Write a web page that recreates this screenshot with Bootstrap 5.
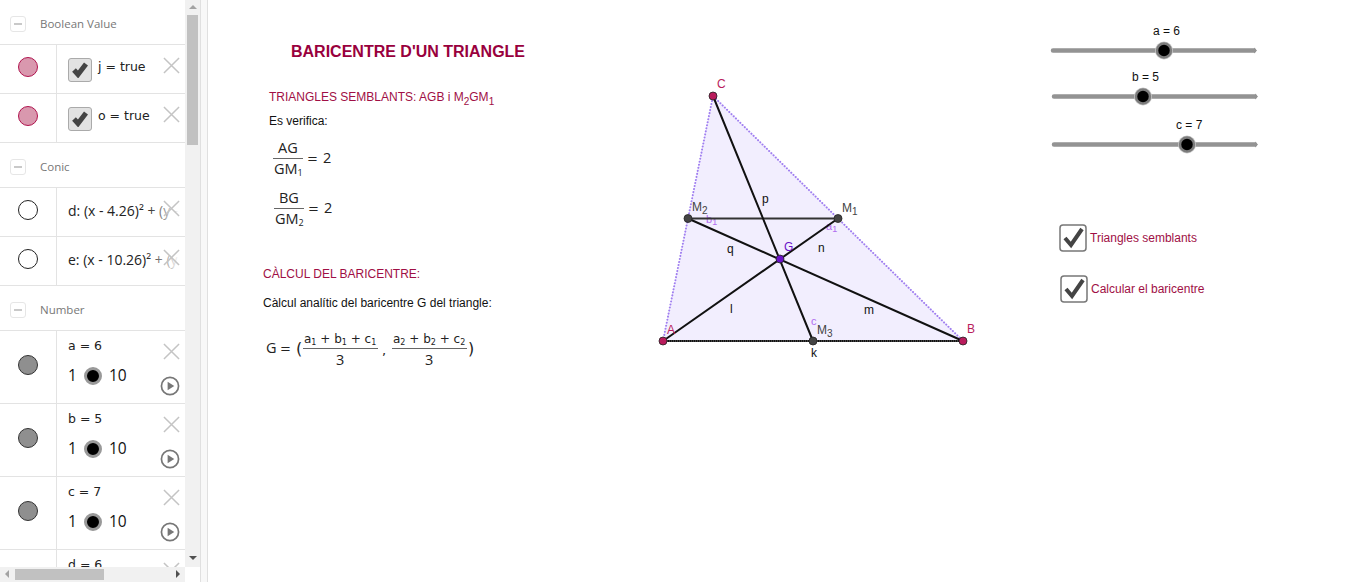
<!DOCTYPE html>
<html lang="ca">
<head>
<meta charset="utf-8">
<title>Baricentre d'un triangle</title>
<link href="https://cdn.jsdelivr.net/npm/bootstrap@5.3.0/dist/css/bootstrap.min.css" rel="stylesheet">
<style>
html,body{height:100%;overflow:hidden;background:#fff}
.applet{height:582px;font-family:"Open Sans","Liberation Sans",sans-serif}
.algebra{width:200px;flex:none;position:relative;overflow:hidden}
.algebra-view{width:185px;height:567px;overflow:hidden}
.group-head{height:45px;flex:none;border-bottom:1px solid #e3e3e3;color:#777;font-size:11.500px;padding:4px 0 0 10px;gap:14px}
.collapse-box{width:16px;height:16px;border:1px solid #e6e6e6;border-radius:3px;flex:none}
.collapse-box::after{content:"";width:8px;height:2px;background:#c9c9c9}
.item{border-bottom:1px solid #e3e3e3;height:49px;flex:none}
.item.tall{height:73px}
.marble-cell{width:57px;flex:none;border-right:1px solid #e3e3e3;padding-bottom:4px}
.marble{width:20px;height:20px;border-radius:50%;border:1px solid #222}
.marble.rose{background:#d998ae;border-color:#b0144e}
.marble.grey{background:#8f8f8f;border-color:#333}
.item-body{position:relative;flex:1;min-width:0;padding-left:11px;white-space:nowrap;overflow:hidden;font:12.500px/1.5 "DejaVu Sans",sans-serif;color:#222}
.item-body.line{padding-bottom:4px}
.item-body.tall-body{padding-top:6px}
.item-body.fading{font:14px/1.5 "Open Sans",sans-serif}
.item-body.fading::after{content:"";position:absolute;top:0;bottom:0;right:0;width:38px;background:linear-gradient(90deg,rgba(255,255,255,0),#fff 85%)}
.tick{width:24px;height:24px;background:#e2e2e2;border:1px solid #aaa;border-radius:3px;margin:5px 6px 0 0;flex:none}
.kill{position:absolute;left:106px;top:12px;width:17px;height:17px;z-index:1}
.player{position:absolute;left:103px;top:45px;width:20px;height:20px}
.range-row{font:15.500px/1 "Open Sans",sans-serif;color:#111;gap:7px;margin-top:11px}
.knob{width:18px;height:18px;border-radius:50%;background:#000;border:3px solid #999}
.sb-v{width:15px;background:#f1f1f1;height:567px;position:absolute;left:185px;top:0}
.sb-v i{position:absolute;left:2px;top:15px;width:11px;height:130px;background:#c1c1c1}
.sb-h{width:185px;height:15px;background:#f1f1f1;position:absolute;left:0;top:567px}
.sb-h i{position:absolute;left:15px;top:2px;width:89px;height:11px;background:#c1c1c1}
.arrow{position:absolute;width:0;height:0;border:4px solid transparent}
.a-up{left:189px;top:5px;border-bottom-color:#a3a3a3;border-top-width:0}
.a-down{left:189px;top:556px;border-top-color:#505050;border-bottom-width:0}
.a-left{left:5px;top:570px;border-right-color:#a3a3a3;border-left-width:0}
.a-right{left:176px;top:570px;border-left-color:#505050;border-right-width:0}
.gutter{width:8px;flex:none;background:#f8f8f8;border-left:1px solid #e0e0e0;border-right:1px solid #e0e0e0}
.canvas-wrap{flex:1;min-width:0}
.canvas-wrap svg{display:block}
.t{font-family:"Liberation Sans",Arial,sans-serif}
.m{font-family:"DejaVu Sans",sans-serif;fill:#222}
.caps{font-family:"Open Sans",sans-serif;font-size:14.500px}
</style>
</head>
<body class="m-0">
<main class="applet d-flex">
  <aside class="algebra">
    <div class="algebra-view d-flex flex-column">
      <div class="group-head d-flex align-items-center"><span class="collapse-box d-flex align-items-center justify-content-center"></span>Boolean Value</div>
      <div class="item d-flex"><div class="marble-cell d-flex align-items-center justify-content-center"><span class="marble rose"></span></div><div class="item-body line d-flex align-items-center"><span class="tick d-flex align-items-center justify-content-center"><svg width="18" height="16" viewBox="0 0 18 16"><path d="M3 8l4 4.500L15 2" fill="none" stroke="#444" stroke-width="5"/></svg></span>j = true<svg class="kill" viewBox="0 0 18 18"><path d="M1 1l16 16M17 1L1 17" stroke="#c4c4c4" stroke-width="1.6"/></svg></div></div>
      <div class="item d-flex"><div class="marble-cell d-flex align-items-center justify-content-center"><span class="marble rose"></span></div><div class="item-body line d-flex align-items-center"><span class="tick d-flex align-items-center justify-content-center"><svg width="18" height="16" viewBox="0 0 18 16"><path d="M3 8l4 4.500L15 2" fill="none" stroke="#444" stroke-width="5"/></svg></span>o = true<svg class="kill" viewBox="0 0 18 18"><path d="M1 1l16 16M17 1L1 17" stroke="#c4c4c4" stroke-width="1.6"/></svg></div></div>
      <div class="group-head d-flex align-items-center"><span class="collapse-box d-flex align-items-center justify-content-center"></span>Conic</div>
      <div class="item d-flex"><div class="marble-cell d-flex align-items-center justify-content-center"><span class="marble"></span></div><div class="item-body line fading d-flex align-items-center">d: (x - 4.26)² + (y -<svg class="kill" viewBox="0 0 18 18"><path d="M1 1l16 16M17 1L1 17" stroke="#c4c4c4" stroke-width="1.6"/></svg></div></div>
      <div class="item d-flex"><div class="marble-cell d-flex align-items-center justify-content-center"><span class="marble"></span></div><div class="item-body line fading d-flex align-items-center">e: (x - 10.26)² + (y<svg class="kill" viewBox="0 0 18 18"><path d="M1 1l16 16M17 1L1 17" stroke="#c4c4c4" stroke-width="1.6"/></svg></div></div>
      <div class="group-head d-flex align-items-center"><span class="collapse-box d-flex align-items-center justify-content-center"></span>Number</div>
      <div class="item tall d-flex"><div class="marble-cell d-flex align-items-center justify-content-center"><span class="marble grey"></span></div><div class="item-body tall-body">a = 6<div class="range-row d-flex align-items-center">1<span class="knob"></span>10</div><svg class="kill" viewBox="0 0 18 18"><path d="M1 1l16 16M17 1L1 17" stroke="#c4c4c4" stroke-width="1.6"/></svg><svg class="player" viewBox="0 0 21 21"><circle cx="10.5" cy="10.5" r="9" fill="none" stroke="#777" stroke-width="1.8"/><path d="M8 6l7 4.5-7 4.5z" fill="#777"/></svg></div></div>
      <div class="item tall d-flex"><div class="marble-cell d-flex align-items-center justify-content-center"><span class="marble grey"></span></div><div class="item-body tall-body">b = 5<div class="range-row d-flex align-items-center">1<span class="knob"></span>10</div><svg class="kill" viewBox="0 0 18 18"><path d="M1 1l16 16M17 1L1 17" stroke="#c4c4c4" stroke-width="1.6"/></svg><svg class="player" viewBox="0 0 21 21"><circle cx="10.5" cy="10.5" r="9" fill="none" stroke="#777" stroke-width="1.8"/><path d="M8 6l7 4.5-7 4.5z" fill="#777"/></svg></div></div>
      <div class="item tall d-flex"><div class="marble-cell d-flex align-items-center justify-content-center"><span class="marble grey"></span></div><div class="item-body tall-body">c = 7<div class="range-row d-flex align-items-center">1<span class="knob"></span>10</div><svg class="kill" viewBox="0 0 18 18"><path d="M1 1l16 16M17 1L1 17" stroke="#c4c4c4" stroke-width="1.6"/></svg><svg class="player" viewBox="0 0 21 21"><circle cx="10.5" cy="10.5" r="9" fill="none" stroke="#777" stroke-width="1.8"/><path d="M8 6l7 4.5-7 4.5z" fill="#777"/></svg></div></div>
      <div class="item tall d-flex"><div class="marble-cell"></div><div class="item-body tall-body">d = 6<svg class="kill" viewBox="0 0 18 18"><path d="M1 1l16 16M17 1L1 17" stroke="#c4c4c4" stroke-width="1.6"/></svg></div></div>
    </div>
    <div class="sb-v"><i></i></div><div class="sb-h"><i></i></div>
    <span class="arrow a-up"></span><span class="arrow a-down"></span><span class="arrow a-left"></span><span class="arrow a-right"></span>
  </aside>
  <div class="gutter"></div>
  <div class="canvas-wrap">
    <svg width="1144" height="582" viewBox="208 0 1144 582" role="img" aria-label="Baricentre d'un triangle">
      <g class="t">
        <text x="291" y="57" font-size="16" font-weight="700" fill="#99003d">BARICENTRE D'UN TRIANGLE</text>
        <text x="269" y="101" font-size="12" fill="#a00f45">TRIANGLES SEMBLANTS: AGB i M<tspan font-size="10" dy="4">2</tspan><tspan dy="-4">GM</tspan><tspan font-size="10" dy="4">1</tspan></text>
        <text x="269" y="125" font-size="12" fill="#111">Es verifica:</text>
        <text x="263" y="278" font-size="12" fill="#a00f45">CÀLCUL DEL BARICENTRE:</text>
        <text x="263" y="307" font-size="12" fill="#111">Càlcul analític del baricentre G del triangle:</text>
      </g>
      <g class="m" font-size="13">
        <text class="caps" x="278" y="153">AG</text><path d="M273 158.500h30" stroke="#666"/><text class="caps" x="274" y="174">GM<tspan font-size="9" dy="2">1</tspan></text><text x="307" y="163">=</text><text class="caps" x="323" y="163">2</text>
        <text class="caps" x="279" y="203">BG</text><path d="M274 208.500h30" stroke="#666"/><text class="caps" x="275" y="224">GM<tspan font-size="9" dy="2">2</tspan></text><text x="308" y="213">=</text><text class="caps" x="324" y="213">2</text>
        <text class="caps" x="266" y="353">G</text><text x="280" y="353">=</text><text x="296" y="354" font-size="16">(</text>
        <text x="304" y="343" font-size="12">a<tspan font-size="8" dy="2">1</tspan><tspan dy="-2"> + b</tspan><tspan font-size="8" dy="2">1</tspan><tspan dy="-2"> + c</tspan><tspan font-size="8" dy="2">1</tspan></text>
        <path d="M303 348.500h75M392 348.500h75" stroke="#666"/>
        <text class="caps" x="336" y="365">3</text><text x="382" y="355">,</text>
        <text x="393" y="343" font-size="12">a<tspan font-size="8" dy="2">2</tspan><tspan dy="-2"> + b</tspan><tspan font-size="8" dy="2">2</tspan><tspan dy="-2"> + c</tspan><tspan font-size="8" dy="2">2</tspan></text>
        <text class="caps" x="425" y="365">3</text><text x="468" y="354" font-size="16">)</text>
      </g>

      <path d="M663 341L963 341L713 96Z" fill="#f2eefe"/>
      <path d="M663 341L713 96L963 341" fill="none" stroke="#a07ff0" stroke-width="2" stroke-linecap="round" stroke-dasharray=".1 3"/>
      <g class="t" font-size="11" fill="#b06cf0"><text x="706" y="223">b<tspan font-size="9" dy="2">1</tspan></text><text x="826" y="230">a<tspan font-size="9" dy="2">1</tspan></text><text x="811" y="325">c</text></g>
      <path d="M663 341H963" stroke="#111" stroke-width="2"/>
      <path d="M663 341H963" stroke="#777" stroke-width="1" stroke-dasharray="1 1"/>
      <path d="M688 218.500H838" stroke="#333" stroke-width="2"/>
      <g stroke="#111" stroke-width="2"><path d="M713 96L813 341M663 341L838 218.500M688 218.500L963 341"/></g>

      <g class="t" font-size="12" fill="#111"><text x="762" y="203">p</text><text x="727" y="253">q</text><text x="818" y="252">n</text><text x="730" y="313">l</text><text x="864" y="314">m</text><text x="811" y="357">k</text></g>
      <g class="t" font-size="12" fill="#444"><text x="692" y="211">M<tspan font-size="10" dy="3">2</tspan></text><text x="842" y="212">M<tspan font-size="10" dy="3">1</tspan></text><text x="817" y="334">M<tspan font-size="10" dy="3">3</tspan></text></g>
      <g class="t" font-size="12" fill="#b91c5c"><text x="717" y="88">C</text><text x="667" y="334">A</text><text x="967" y="333">B</text></g>
      <text class="t" x="784" y="251" font-size="12" fill="#6a10c8">G</text>

      <g stroke="#222" stroke-width=".8" fill="#b91c5c"><circle cx="713" cy="96" r="4"/><circle cx="663" cy="341" r="4"/><circle cx="963" cy="341" r="4"/></g>
      <g stroke="#222" stroke-width=".8" fill="#444"><circle cx="688" cy="218.500" r="4"/><circle cx="838" cy="218.500" r="4"/><circle cx="813" cy="341" r="4"/></g>
      <circle cx="780" cy="259" r="4" fill="#6a10c8" stroke="#222" stroke-width=".8"/>

      <g class="t" font-size="12" fill="#111"><text x="1153" y="35">a = 6</text><text x="1132" y="81">b = 5</text><text x="1176" y="129">c = 7</text></g>
      <g stroke="#939393" stroke-width="4.500" stroke-linecap="round">
        <path d="M1053 50.500H1254M1054 96.500H1255M1054 144.500H1255"/>
      </g>
      <g fill="#939393"><path d="M1254 47.500l3 3-3 3zM1255 93.500l3 3-3 3zM1255 141.500l3 3-3 3z"/></g>
      <g fill="#c9c9c9"><circle cx="1164" cy="50.500" r="9"/><circle cx="1143" cy="96.500" r="9"/><circle cx="1187" cy="144.500" r="9"/></g>
      <g fill="#000" stroke="#7c7c7c" stroke-width="2.500"><circle cx="1164" cy="50.500" r="7"/><circle cx="1143" cy="96.500" r="7"/><circle cx="1187" cy="144.500" r="7"/></g>

      <g fill="#fff" stroke="#777" stroke-width="1.500"><rect x="1060" y="225" width="26" height="26" rx="3"/><rect x="1061" y="276" width="26" height="26" rx="3"/></g>
      <g fill="none" stroke="#444" stroke-width="4"><path d="M1065 238l6 7 11-16M1066 289l6 7 11-16"/></g>
      <g class="t" font-size="12" fill="#a00f45"><text x="1090" y="242">Triangles semblants</text><text x="1091" y="293">Calcular el baricentre</text></g>
    </svg>
  </div>
</main>
<script src="https://cdn.jsdelivr.net/npm/bootstrap@5.3.0/dist/js/bootstrap.bundle.min.js"></script>
</body>
</html>
